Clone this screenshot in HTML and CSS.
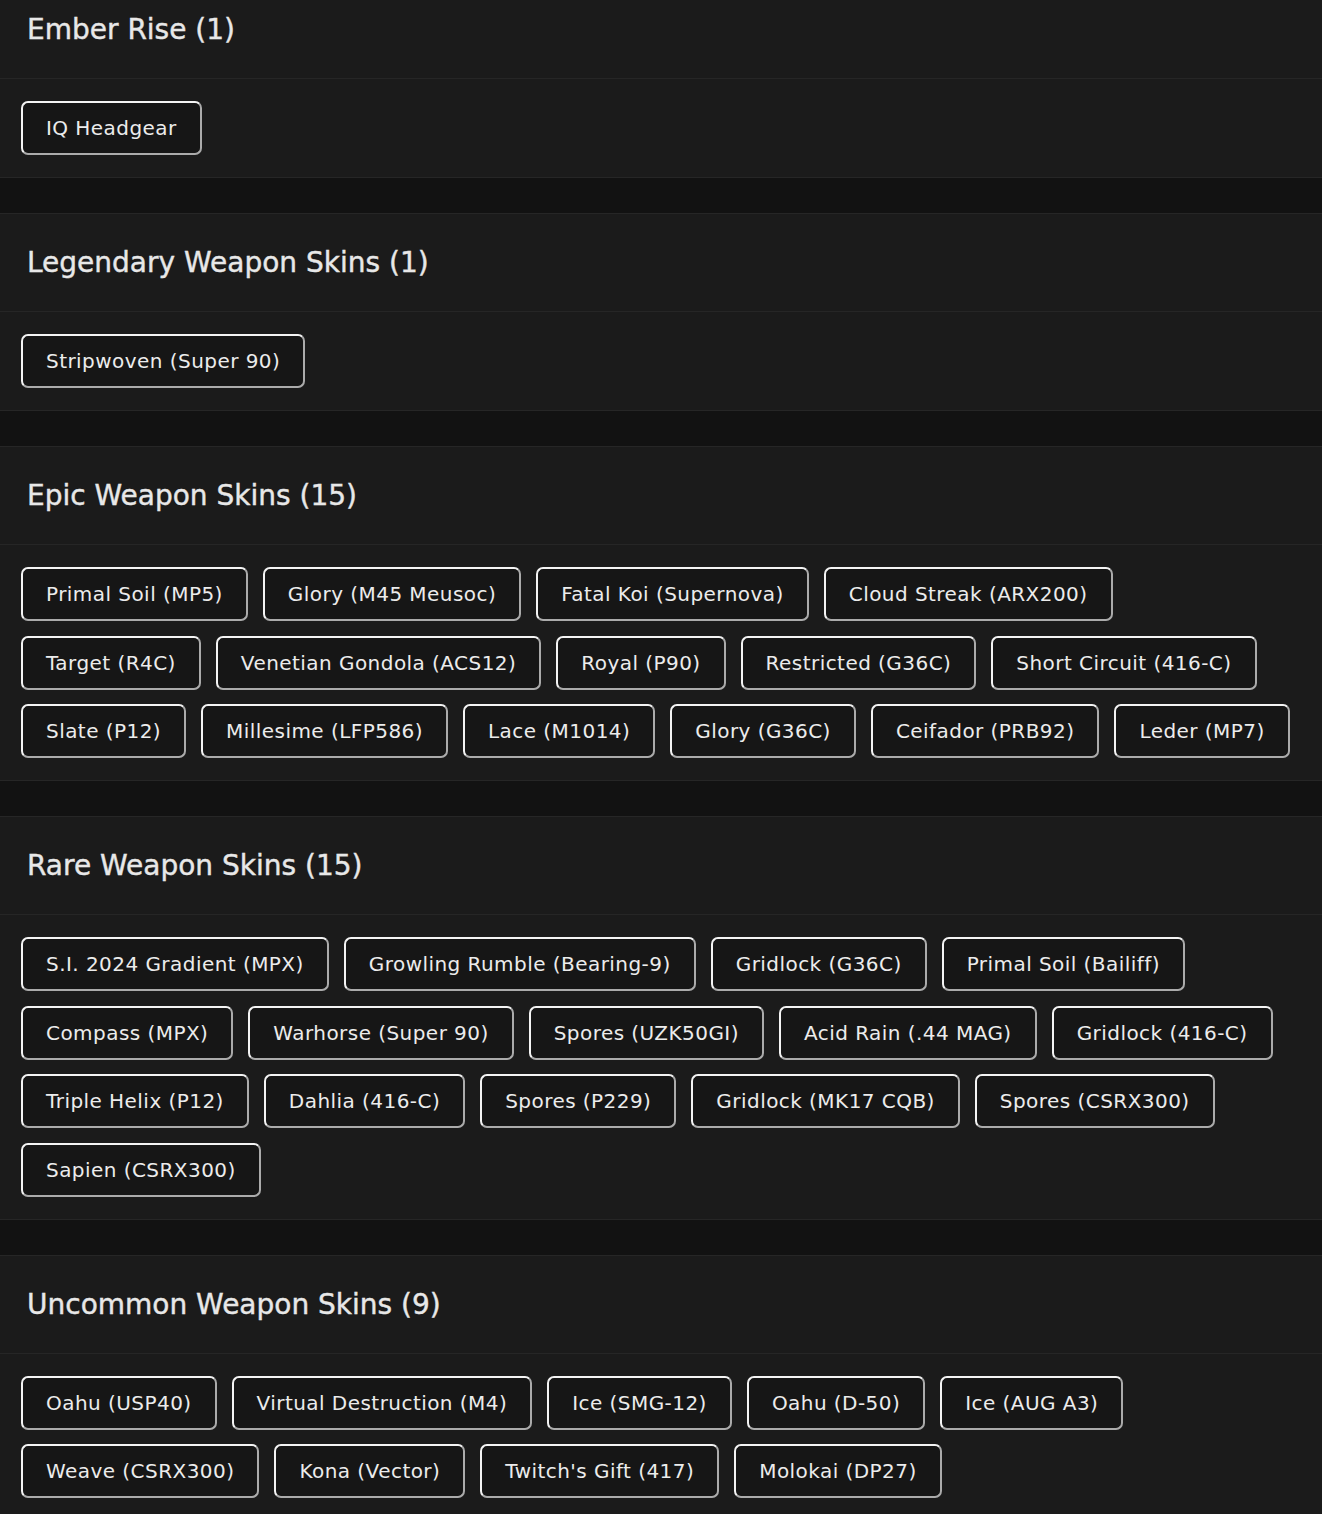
FILE: index.html
```html
<!DOCTYPE html>
<html lang="en">
<head>
<meta charset="utf-8">
<title>Skins</title>
<link rel="stylesheet" href="styles.css">
</head>
<body>
<div class="page">
  <section class="card">
    <header class="card-head"><h2>Ember Rise (1)</h2></header>
    <div class="card-body">
      <span class="tag">IQ Headgear</span>
    </div>
  </section>

  <section class="card">
    <header class="card-head"><h2>Legendary Weapon Skins (1)</h2></header>
    <div class="card-body">
      <span class="tag">Stripwoven (Super 90)</span>
    </div>
  </section>

  <section class="card">
    <header class="card-head"><h2>Epic Weapon Skins (15)</h2></header>
    <div class="card-body">
      <span class="tag">Primal Soil (MP5)</span>
      <span class="tag">Glory (M45 Meusoc)</span>
      <span class="tag">Fatal Koi (Supernova)</span>
      <span class="tag">Cloud Streak (ARX200)</span>
      <span class="tag">Target (R4C)</span>
      <span class="tag">Venetian Gondola (ACS12)</span>
      <span class="tag">Royal (P90)</span>
      <span class="tag">Restricted (G36C)</span>
      <span class="tag">Short Circuit (416-C)</span>
      <span class="tag">Slate (P12)</span>
      <span class="tag">Millesime (LFP586)</span>
      <span class="tag">Lace (M1014)</span>
      <span class="tag">Glory (G36C)</span>
      <span class="tag">Ceifador (PRB92)</span>
      <span class="tag">Leder (MP7)</span>
    </div>
  </section>

  <section class="card">
    <header class="card-head"><h2>Rare Weapon Skins (15)</h2></header>
    <div class="card-body">
      <span class="tag">S.I. 2024 Gradient (MPX)</span>
      <span class="tag">Growling Rumble (Bearing-9)</span>
      <span class="tag">Gridlock (G36C)</span>
      <span class="tag">Primal Soil (Bailiff)</span>
      <span class="tag">Compass (MPX)</span>
      <span class="tag">Warhorse (Super 90)</span>
      <span class="tag">Spores (UZK50GI)</span>
      <span class="tag">Acid Rain (.44 MAG)</span>
      <span class="tag">Gridlock (416-C)</span>
      <span class="tag">Triple Helix (P12)</span>
      <span class="tag">Dahlia (416-C)</span>
      <span class="tag">Spores (P229)</span>
      <span class="tag">Gridlock (MK17 CQB)</span>
      <span class="tag">Spores (CSRX300)</span>
      <span class="tag">Sapien (CSRX300)</span>
    </div>
  </section>

  <section class="card">
    <header class="card-head"><h2>Uncommon Weapon Skins (9)</h2></header>
    <div class="card-body">
      <span class="tag">Oahu (USP40)</span>
      <span class="tag">Virtual Destruction (M4)</span>
      <span class="tag">Ice (SMG-12)</span>
      <span class="tag">Oahu (D-50)</span>
      <span class="tag">Ice (AUG A3)</span>
      <span class="tag">Weave (CSRX300)</span>
      <span class="tag">Kona (Vector)</span>
      <span class="tag">Twitch's Gift (417)</span>
      <span class="tag">Molokai (DP27)</span>
    </div>
  </section>
</div>
</body>
</html>
```
FILE: styles.css
```css
html, body {
  margin: 0;
  padding: 0;
  background: #121212;
}
body {
  font-family: "DejaVu Sans", "Liberation Sans", sans-serif;
  color: #e8e8e8;
  overflow: hidden;
}
.page {
  margin-top: -20px;
  display: flex;
  flex-direction: column;
  gap: 35px;
}
.card {
  background: #1b1b1b;
  border-top: 1px solid #262626;
  border-bottom: 1px solid #262626;
}
.card-head {
  padding: 32px 27px 31px;
  border-bottom: 1px solid #262626;
}
.card-head h2 {
  margin: 0;
  font-size: 28px;
  line-height: 34px;
  font-weight: 500;
  color: #e8e8e8;
  letter-spacing: 0;
  -webkit-text-stroke: 0.4px #e8e8e8;
}
.card-body {
  padding: 22px 21px;
  display: flex;
  flex-wrap: wrap;
  gap: 14.5px 15px;
}
.tag {
  display: inline-block;
  box-sizing: border-box;
  height: 54px;
  padding: 13px 23px;
  font-size: 20px;
  line-height: 24px;
  color: #ececec;
  background: #161616;
  border: 2px solid;
  border-color: #f4f4f4 #ababab #ababab #f4f4f4;
  border-radius: 7px;
  letter-spacing: 0.45px;
  white-space: nowrap;
}
```
